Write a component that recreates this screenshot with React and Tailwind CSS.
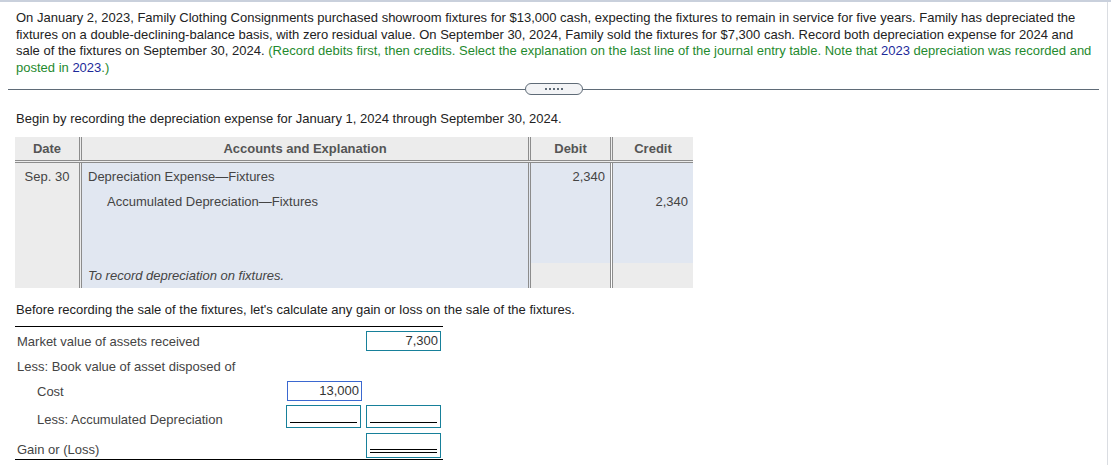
import React from "react";

const blue = "bg-[#e1e7f1]";
const gray = "bg-[#ececec]";
const dbl = "border-[#8c8c8c] border-double";

const Box = ({ value, tone = "teal", line }) => (
  <div
    className={`h-full w-[75px] border ${tone === "blue" ? "border-[#3b68d0]" : "border-[#17809a]"} bg-white flex flex-col justify-end px-[3px] pb-[4px] relative`}
  >
    {value && <span className="absolute right-[2px] top-[1px] text-[13px] leading-[16px] text-[#333]">{value}</span>}
    {line === "single" && <div className="h-[1px] bg-black" />}
    {line === "double" && (
      <div className="flex flex-col gap-[2px]">
        <div className="h-[1px] bg-black" />
        <div className="h-[1px] bg-black" />
      </div>
    )}
  </div>
);

const App = () => {
  return (
    <div className="w-[1111px] h-[465px] overflow-hidden bg-white border-t-2 border-[#c9d0dc] font-['Liberation_Sans',Arial,sans-serif] text-[13px] text-[#222]">
      <div className="w-[1108px] h-full border-r border-[#dadde2]">
        {/* question text */}
        <p className="pl-4 pr-[14px] pt-[8px] leading-[16.5px]">
          On January 2, 2023, Family Clothing Consignments purchased showroom fixtures for $13,000 cash, expecting the fixtures to remain in service for five years. Family has depreciated the fixtures on a double-declining-balance basis, with zero residual value. On September 30, 2024, Family sold the fixtures for $7,300 cash. Record both depreciation expense for 2024 and sale of the fixtures on September 30, 2024.{" "}
          <span className="text-[#1f8a2e]">
            (Record debits first, then credits. Select the explanation on the last line of the journal entry table. Note that <span className="text-[#1d2a9a]">2023</span> depreciation was recorded and posted in <span className="text-[#1d2a9a]">2023</span>.)
          </span>
        </p>

        {/* divider */}
        <div className="flex items-center mx-2 mt-[7px]">
          <div className="flex-1 h-[1px] bg-[#5f6b77]" />
          <div className="w-[58px] h-[12px] rounded-full border border-[#5f6b77] bg-[#f3f4f6] flex items-center justify-center gap-[2px]">
            {[0, 1, 2, 3, 4].map((i) => (
              <span key={i} className="w-[2px] h-[2px] bg-[#5f6b77]" />
            ))}
          </div>
          <div className="flex-1 h-[1px] bg-[#5f6b77]" />
        </div>

        <p className="pl-4 mt-[16px] leading-[16px]">
          Begin by recording the depreciation expense for January 1, 2024 through September 30, 2024.
        </p>

        {/* journal table */}
        <div className="ml-[15px] mt-[10px] w-[678px] text-[#444]">
          <div className={`grid grid-cols-[67px_449px_82px_80px] h-[26px] ${gray} border-b-[3px] ${dbl} font-bold text-[#555]`}>
            <div className={`border-r-[3px] ${dbl} flex items-center justify-center pt-[1px]`}>Date</div>
            <div className={`border-r-[3px] ${dbl} flex items-center justify-center pt-[1px]`}>Accounts and Explanation</div>
            <div className={`border-r-[3px] ${dbl} flex items-center justify-center pt-[1px]`}>Debit</div>
            <div className="flex items-center justify-center pt-[1px]">Credit</div>
          </div>
          <div className="grid grid-cols-[67px_449px_82px_80px] h-[125px]">
            <div className={`${gray} border-r-[3px] ${dbl} text-center pt-[4px]`}>Sep. 30</div>
            <div className={`${blue} border-r-[3px] ${dbl} flex flex-col`}>
              <div className="h-[25px] pl-[6px] pt-[4px]">Depreciation Expense—Fixtures</div>
              <div className="h-[25px] pl-[25px] pt-[4px]">Accumulated Depreciation—Fixtures</div>
              <div className="flex-1" />
              <div className="h-[25px] pl-[6px] pt-[3px] italic">To record depreciation on fixtures.</div>
            </div>
            <div className={`border-r-[3px] ${dbl} flex flex-col`}>
              <div className={`h-[100px] ${blue} text-right pr-[5px] pt-[4px]`}>2,340</div>
              <div className={`flex-1 ${gray}`} />
            </div>
            <div className="flex flex-col">
              <div className={`h-[100px] ${blue} text-right pr-[5px] pt-[29px]`}>2,340</div>
              <div className={`flex-1 ${gray}`} />
            </div>
          </div>
        </div>

        <p className="pl-4 mt-[14px] leading-[16px]">
          Before recording the sale of the fixtures, let's calculate any gain or loss on the sale of the fixtures.
        </p>

        {/* gain or loss calc */}
        <div className="ml-[15px] mt-[8px] w-[428px] border-t border-b border-black text-[#444] leading-[16px]">
          <div className="flex items-center h-[28px]">
            <span className="pl-[2px] pt-[2px] flex-1">Market value of assets received</span>
            <div className="h-[20px] mr-[2px]"><Box value="7,300" /></div>
          </div>
          <div className="flex items-center h-[24px]">
            <span className="pl-[2px]">Less: Book value of asset disposed of</span>
          </div>
          <div className="flex items-center h-[24px]">
            <span className="pl-[22px] pt-[1px] flex-1">Cost</span>
            <div className="h-[20px] mr-[81px]"><Box value="13,000" tone="blue" /></div>
          </div>
          <div className="flex items-start h-[28px]">
            <span className="pl-[22px] pt-[9px] flex-1">Less: Accumulated Depreciation</span>
            <div className="h-[23px] mt-[2px] flex gap-[5px] mr-[2px]">
              <Box line="single" />
              <Box line="single" />
            </div>
          </div>
          <div className="flex items-start h-[28px]">
            <span className="pl-[2px] pt-[11px] flex-1">Gain or (Loss)</span>
            <div className="h-[25px] mt-[2px] mr-[2px]"><Box line="double" /></div>
          </div>
        </div>
      </div>
    </div>
  );
};

export default App;
